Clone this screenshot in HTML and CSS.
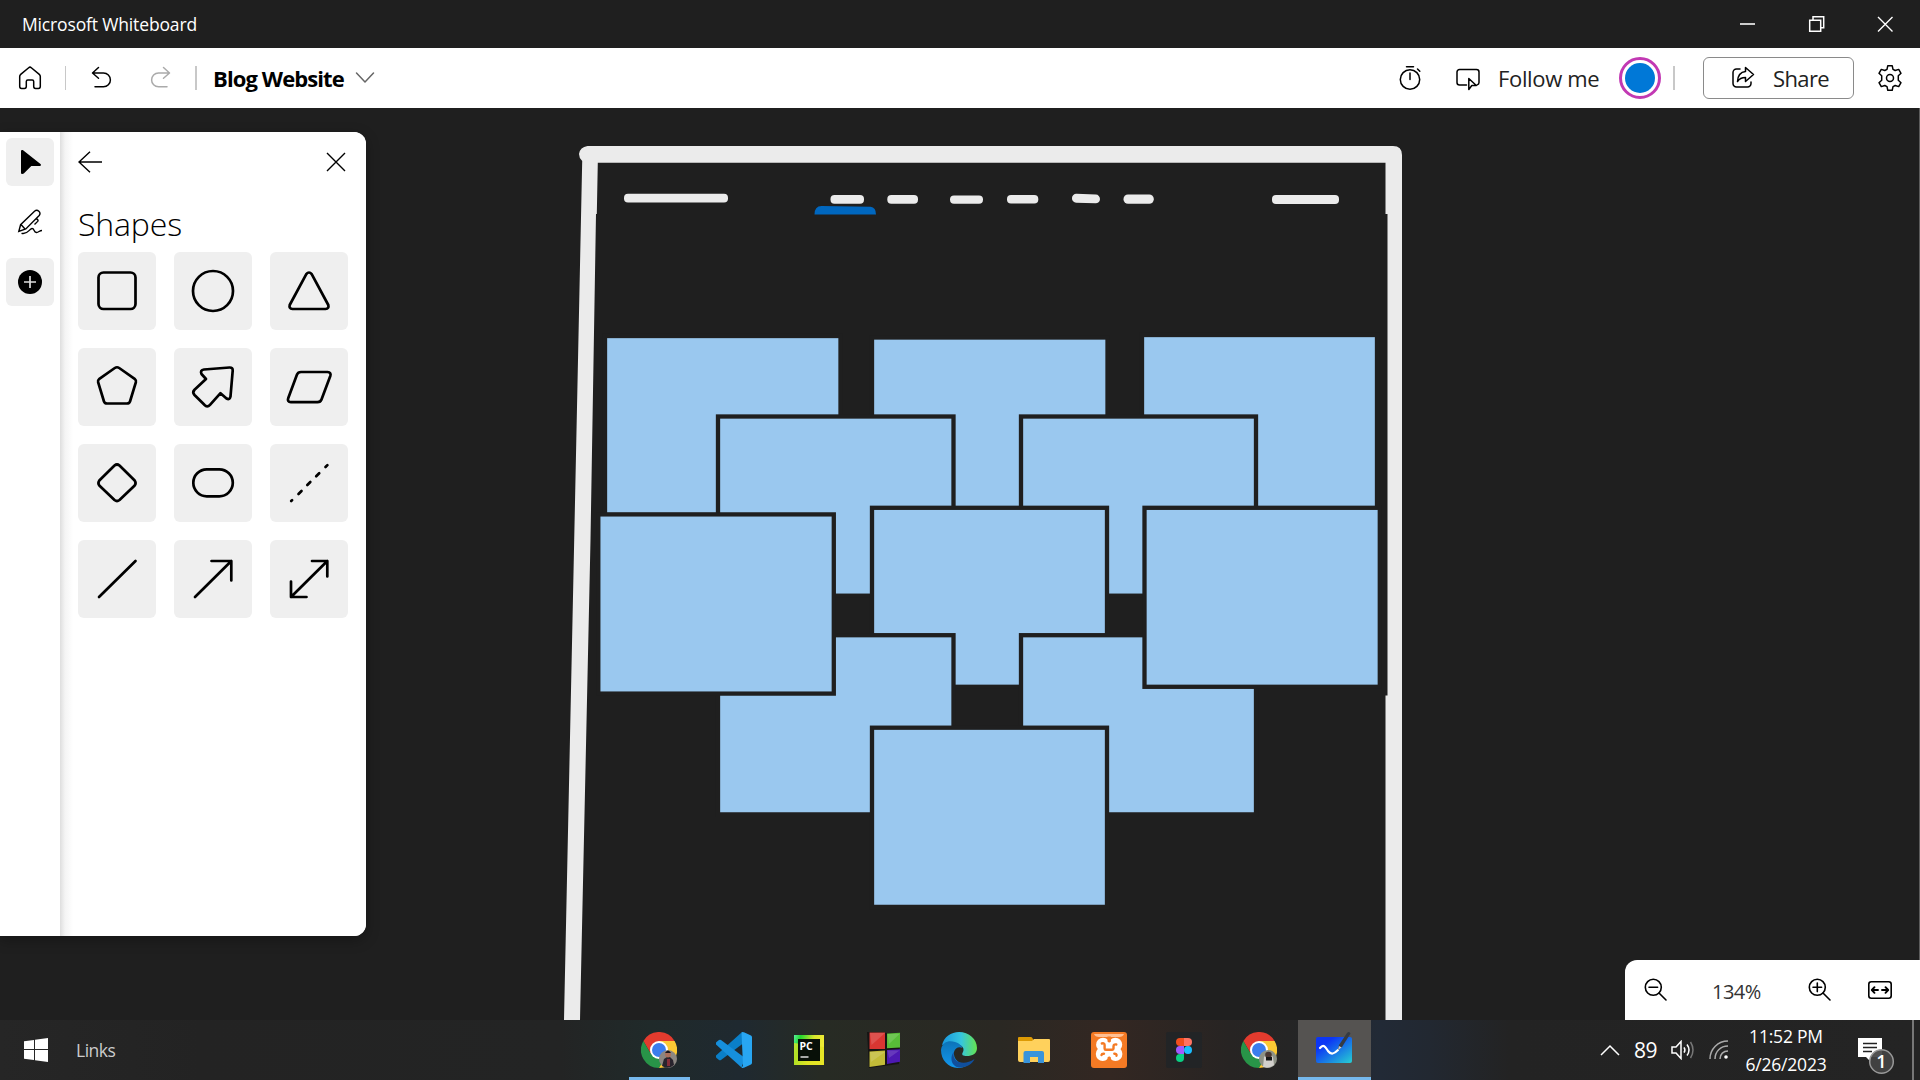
FILE: index.html
```html
<!DOCTYPE html>
<html lang="en">
<head>
<meta charset="utf-8">
<title>Microsoft Whiteboard</title>
<link rel="stylesheet" href="styles.css">
</head>
<body>
<div class="desktop">
  <header class="titlebar">
    <span class="app-name">Microsoft Whiteboard</span>
    <div class="window-controls">
      <svg width="69" height="48" viewBox="0 0 69 48"><path d="M27 24h15" stroke="#ccc" stroke-width="2"/></svg>
      <svg width="69" height="48" viewBox="0 0 69 48" fill="none" stroke="#fff" stroke-width="1.5"><path d="M27.7 20.2h11v11h-11zM31 20v-3.2h10.700v11H39"/></svg>
      <svg width="69" height="48" viewBox="0 0 69 48" fill="none" stroke="#fff" stroke-width="1.4"><path d="M27 17l14.500 14.500M41.500 17L27 31.500"/></svg>
    </div>
  </header>

  <nav class="toolbar">
    <div class="tools">
      <svg class="i-home" width="24" height="24" viewBox="0 0 24 24"><path d="M10.700 1.700a2 2 0 0 1 2.600 0l8 6.700c.7.600 1 1.300 1 2.200v10a1.800 1.800 0 0 1-1.800 1.800h-3a1.800 1.800 0 0 1-1.800-1.800V15.500c0-.9-.6-1.500-1.500-1.500h-4.400c-.9 0-1.500.6-1.500 1.500v5.100a1.800 1.800 0 0 1-1.800 1.800h-3a1.800 1.800 0 0 1-1.800-1.800v-10c0-.9.3-1.600 1-2.200z"/></svg>
      <i class="divider thin"></i>
      <svg class="i-undo" width="24" height="24" viewBox="0 0 24 24"><path d="M9.500 1.500L3.500 7l6 5.200M3.800 7h10.700a6.900 6.900 0 0 1 0 13.800H6"/></svg>
      <svg class="i-redo" width="24" height="24" viewBox="0 0 24 24"><path d="M14.500 1.500l6 5.500-6 5.200M20.200 7H9.500a6.900 6.900 0 0 0 0 13.800H18"/></svg>
      <i class="divider"></i>
      <span class="board-name">Blog Website</span>
      <svg class="i-down" width="20" height="14" viewBox="0 0 20 14"><path d="M1.500 2L10 11l8.500-9"/></svg>
    </div>
    <div class="actions">
      <svg width="24" height="26" viewBox="0 0 24 26"><circle cx="12" cy="14.500" r="9.700"/><path d="M12 8v6.500M8.500 1.800h7M19.500 4l2.300 2.300"/></svg>
      <svg class="i-present" width="26" height="26" viewBox="0 0 26 26"><path d="M11.500 20H4.500a2.500 2.500 0 0 1-2.500-2.500V7a2.500 2.500 0 0 1 2.500-2.500h17A2.500 2.500 0 0 1 24 7v10.500a2.500 2.500 0 0 1-1.800 2.400M13.800 13.500v11l3-4h4.500z"/></svg>
      <span class="follow">Follow me</span>
      <svg class="avatar" width="42" height="42" viewBox="0 0 42 42"><circle cx="21" cy="21" r="19.500" fill="#fff" stroke="#c239b3" stroke-width="3"/><circle cx="21" cy="21" r="15" fill="#0078d7" stroke="none"/></svg>
      <i class="divider"></i>
      <button class="share">
        <svg width="26" height="26" viewBox="0 0 26 26"><path d="M10 4H6.500A3.500 3.500 0 0 0 3 7.500v11A3.500 3.500 0 0 0 6.500 22h11a3.500 3.500 0 0 0 3.500-3.500V17M15.500 2.500l8 7-8 7v-4c-4 0-6.300 1.300-8 4 .3-5.500 3-9.500 8-10z"/></svg>
        <span>Share</span>
      </button>
      <svg class="i-gear" width="28" height="28" viewBox="0 0 28 28"><path d="M11.800 1.700h4.400l.8 3.600 2.200 1.200 3.500-1.100 2.300 3.900-2.700 2.500v4.400l2.700 2.500-2.300 3.900-3.500-1.100-2.200 1.200-.8 3.600h-4.400l-.8-3.600-2.200-1.200-3.500 1.100L3 18.700l2.700-2.500v-4.400L3 9.300l2.300-3.900 3.500 1.100L11 5.300z"/><circle cx="14" cy="14" r="3.500"/></svg>
    </div>
  </nav>

  <main class="board">
    <svg class="drawing" width="1920" height="912" viewBox="0 108 1920 912">
      <path class="ink" d="M587.500 146H1393q9 0 9 9V1020h-16.500V695.400h2V214h-2V162.700H597.800L596.800 214h-.8L590.500 540 580 1020H564L574.200 540 582.200 161Q579 158 579 154q1-7 8.500-8z"/>
      <g class="ink">
        <rect x="624" y="193.700" width="104" height="8.800" rx="4"/>
        <rect x="830.500" y="195" width="33.500" height="8.800" rx="4"/>
        <rect x="887.300" y="195" width="30.700" height="8.800" rx="4"/>
        <rect x="950" y="195.400" width="33" height="8.300" rx="4"/>
        <rect x="1007" y="195" width="31.300" height="8.400" rx="4"/>
        <rect x="1072" y="194.200" width="28" height="8.800" rx="4.300" transform="rotate(2 1086 198)"/>
        <rect x="1123.500" y="194.500" width="30.300" height="9.200" rx="4.500"/>
        <rect x="1272" y="195" width="67" height="9" rx="4"/>
      </g>
      <path d="M814.500 214.500q0-8.500 7-8.500l49 .8q5.500.7 5.500 7.700z" fill="#0067bf"/>
      <g class="cards">
        <rect x="605" y="336" width="235.500" height="179"/>
        <rect x="872" y="337.500" width="235.500" height="179"/>
        <rect x="1142" y="335" width="235" height="179"/>
        <rect x="718" y="416.500" width="235.500" height="179.200"/>
        <rect x="1021" y="416.500" width="235" height="179.200"/>
        <rect x="872" y="507.800" width="235" height="179"/>
        <rect x="718" y="635.200" width="235.500" height="179.200"/>
        <rect x="1021" y="635.200" width="235" height="179.200"/>
        <rect x="598.300" y="514.400" width="235.500" height="179.200"/>
        <rect x="1144.500" y="507.800" width="235.300" height="179"/>
        <rect x="872" y="727.700" width="235" height="179.200"/>
      </g>
      <path d="M1919.500 108V961" stroke="#5c5c5c"/>
    </svg>

    <aside class="panel">
      <div class="rail">
        <button class="rail-btn on"><svg width="24" height="26" viewBox="0 0 24 26"><path d="M3 2.300c0-1.200 1.200-1.700 2.100-1L22.500 15c1 .8.500 2-.7 2h-8.500l-7.500 7.500C4.400 25.400 3 25 3 23.700z"/></svg></button>
        <button class="rail-btn"><svg width="26" height="26" viewBox="0 0 26 26" fill="none" stroke="#000" stroke-width="1.400"><path d="M1.800 22.500l1.800-6.800L17.500 2.300c3-2.500 7 1 4.700 4.200L8.800 20zM4 15.500L8 20M19.500 9.500l1.200 1.300c.5.600.5 1 0 1.600l-3.200 3.200M4.500 24.300c6 1.800 7.500-4.300 10.500-4.800 2.500-.3 1.500 4.200 4.500 4 2.300-.2 3-2 5.500-2"/></svg></button>
        <button class="rail-btn on"><svg width="24" height="24" viewBox="0 0 24 24"><circle cx="12" cy="12" r="12"/><path d="M12 6v12M6 12h12" stroke="#ddd" stroke-width="1.700"/></svg></button>
      </div>
      <section class="shapes">
        <div class="shapes-head">
          <svg width="24" height="22" viewBox="0 0 24 22"><path d="M12 .8L1 11l11 10.200M1 11h23"/></svg>
          <svg width="20" height="20" viewBox="0 0 20 20"><path d="M1 1l18 18M19 1L1 19"/></svg>
        </div>
        <h1>Shapes</h1>
        <div class="grid">
          <button><svg viewBox="0 0 78 78"><rect x="20.500" y="20.500" width="37" height="36.500" rx="5"/></svg></button>
          <button><svg viewBox="0 0 78 78"><circle cx="39" cy="39" r="20"/></svg></button>
          <button><svg viewBox="0 0 78 78"><path d="M36.300 22.200q2.700-3.400 5.400 0L58.300 53q1 3.700-2.800 4h-33q-3.800-.3-2.800-4z"/></svg></button>
          <button><svg viewBox="0 0 78 78"><path d="M36.800 20q2.200-1.500 4.400 0L57 31.200q1.500 1.200.9 3L52 53.500q-.8 2-3 2H29q-2.200 0-3-2L20.100 34.200q-.6-1.800.9-3z"/></svg></button>
          <button><svg viewBox="0 0 78 78"><path d="M30 21.500L55.500 19.500q3.500-.2 3.200 3.200L56.500 48.500q-.8 3.800-4 2l-6-5.300L36 56.800q-2.800 3-5.600 0L20.500 47q-2.500-2.600 0-5.200L32 31l-4.500-5q-1.700-3.800 2.500-4.500z"/></svg></button>
          <button><svg viewBox="0 0 78 78"><path d="M31 24H57.500q4 .5 2.800 4L51.500 51.500q-1 2.700-4 2.700H21q-4-.5-2.800-4L27 26.500Q28 24 31 24z"/></svg></button>
          <button><svg viewBox="0 0 78 78"><path d="M36.500 21.500q2.500-2 5 0L56.700 36.500q1.800 2.500 0 5L41.500 56q-2.500 2-5 0L21.300 41.500q-1.800-2.500 0-5z"/></svg></button>
          <button><svg viewBox="0 0 78 78"><rect x="19.300" y="25.300" width="39.500" height="27" rx="13.500"/></svg></button>
          <button><svg viewBox="0 0 78 78"><path d="M21.200 57l.9-.9M28.500 50l3-3M37.300 41l3-3M46.200 32.200l3-3M55.500 23l1.900-1.900"/></svg></button>
          <button><svg viewBox="0 0 78 78"><path d="M21 57L57.500 21"/></svg></button>
          <button><svg viewBox="0 0 78 78"><path d="M21 57L57.300 21M37.500 21h19.800v19.500"/></svg></button>
          <button><svg viewBox="0 0 78 78"><path d="M21 57L57.300 21M42 21h15.300v15.500M21 41.500V57h15.500"/></svg></button>
        </div>
      </section>
    </aside>

    <div class="zoombar">
      <svg width="24" height="24" viewBox="0 0 24 24"><circle cx="9.300" cy="9.300" r="8"/><path d="M15 15l7 7M5 9.300h8.600"/></svg>
      <span>134%</span>
      <svg class="i-in" width="24" height="24" viewBox="0 0 24 24"><circle cx="9.300" cy="9.300" r="8"/><path d="M15 15l7 7M5 9.300h8.600M9.300 5v8.600"/></svg>
      <svg class="i-fit" width="24" height="18" viewBox="0 0 24 18"><rect x=".8" y=".8" width="22.400" height="16.400" rx="2.500"/><path d="M10 9H4M6.500 6.200L3.800 9l2.700 2.800M14 9h6M17.500 6.200L20.200 9l-2.700 2.800" stroke-width="1.900"/></svg>
    </div>
  </main>

  <footer class="taskbar">
    <div class="start">
      <svg width="24" height="24" viewBox="0 0 24 24"><path fill="#fff" d="M0 3.300L10 1.900V11H0zM11 1.700L24 0v11H11zM0 12h10v9.900L0 20.700zM11 12h13v12l-13-1.800z"/></svg>
      <span>Links</span>
    </div>
    <div class="apps">
      <div class="app running">
        <svg width="36" height="36" viewBox="0 0 36 36"><path d="M2.400 9A18 18 0 0 1 33.600 9H18l-7.800 13.500z" fill="#e33b2e"/><path d="M2.400 9A18 18 0 0 0 18 36l7.800-13.500H10.200z" fill="#289448"/><path d="M33.600 9A18 18 0 0 1 18 36l7.800-13.500L18 9z" fill="#fcc934"/><circle cx="18" cy="18" r="9" fill="#fff"/><circle cx="18" cy="18" r="7" fill="#3b7ded"/><circle cx="27" cy="27" r="9" fill="#8b8681"/><path d="M21 34l2-7 3-2h3l3 3 1 5q-6 5-12 1z" fill="#28242d"/><circle cx="27" cy="22.500" r="3" fill="#aa705b"/><path d="M24 21q3-5 6 0z" fill="#181519"/><path d="M26 27h3v7h-3z" fill="#832e39"/></svg>
      </div>
      <div class="app">
        <svg width="36" height="36" viewBox="0 0 36 36"><path d="M25.500.5L0 23.500q-.5 1.500.5 2.500L3 28q1 .4 2 0L29 10z" fill="#0a7fc8"/><path d="M25.500 35.500L0 12.500q-.5-1.500.5-2.500L3 8q1-.4 2 0L29 26z" fill="#168fdc"/><path d="M25.500.3q1.500-.5 3 .2L35 3.500q1 .5 1 1.800v25.400q0 1.300-1 1.800l-6.500 3q-1.500.7-3 .2l1.500-2z" fill="#28a6f2"/></svg>
      </div>
      <div class="app">
        <svg width="30" height="30" viewBox="0 0 30 30"><defs><linearGradient id="pc" x1="0" y1="0" x2="1" y2=".25"><stop offset="0" stop-color="#59ed9c"/><stop offset=".22" stop-color="#21d72d"/><stop offset=".65" stop-color="#d8e52d"/><stop offset="1" stop-color="#f1ec35"/></linearGradient></defs><path d="M0 0h30v30H0z" fill="url(#pc)"/><path d="M0 8l30 4v18H0z" fill="#e2e322" opacity=".75"/><path d="M4 4h22v22H4z" fill="#081008"/><text x="5.500" y="15" class="pc">PC</text><path d="M6.500 22h8" stroke="#ddd" stroke-width="1.500"/></svg>
      </div>
      <div class="app">
        <svg width="34" height="36" viewBox="0 0 34 36"><path d="M0 0l18 1 15 0-1 31-30 4z" fill="#161414"/><path d="M2.500.5h15.500v16.500H2.500z" fill="#d93632"/><path d="M20 1.500l13-.8v14.800l-13 .8z" fill="#58bd38"/><path d="M2.500 19.500l15.500-1v14.200L2.500 35z" fill="#c2bb38"/><path d="M20 18l13-.7v12.500L20 32z" fill="#4d19b2"/><path d="M3 1h15L4.500 13zM20.500 2h12L22 12zM3 20h15L4 30zM20.500 18.500h12L22 26z" fill="#fff" opacity=".14"/></svg>
      </div>
      <div class="app">
        <svg width="36" height="36" viewBox="0 0 36 36"><defs><linearGradient id="e1"><stop offset="0" stop-color="#1795df"/><stop offset=".55" stop-color="#36c5dd"/><stop offset="1" stop-color="#65e34f"/></linearGradient><linearGradient id="e2" x2="0" y2="1"><stop stop-color="#0c73b8"/><stop offset="1" stop-color="#1398ef"/></linearGradient></defs><path d="M1 13C3 5 10 0 18 0c10 0 18 7 18 16 0 6-5 8-10 8-4 0-6-1-4-4 3-6-6-11-21-7z" fill="url(#e1)"/><path d="M0 18C1 9 9 8 14 10c4 1 7 4 7.500 6C18 14 14 16 13 20c-1 8 6 13 15 12-4 3-8 4-11 4C7 35.500 0 28 0 18z" fill="url(#e2)"/><path d="M13 20c-3 9 9 15 20.500 7-2 5-8 9-16 8.500C8 33 10 22 13 20z" fill="#104f9d"/></svg>
      </div>
      <div class="app">
        <svg width="32" height="28" viewBox="0 0 32 28"><path d="M0 2q0-1 1-1h12q1 0 2 2l1 3H0z" fill="#dd9a04"/><path d="M0 5h14l2-2h15q1 0 1 1v20q0 2-2 2H2q-2 0-2-2z" fill="#ffd15c"/><path d="M5.500 27V17q0-2 2-2H24q2 0 2 2v10h-6v-6h-8v6z" fill="#3994db"/></svg>
      </div>
      <div class="app">
        <svg width="36" height="36" viewBox="0 0 36 36"><rect width="36" height="36" rx="3" fill="#f47a24"/><path d="M3 2h30q-1 3-5 3H8Q4 5 3 2z" fill="#ffc094"/><g fill="#fff"><circle cx="12" cy="12.700" r="6.900"/><circle cx="24.300" cy="12.700" r="6.900"/><circle cx="11.700" cy="22" r="6.900"/><circle cx="24.500" cy="22" r="6.900"/><path d="M9 11h18v13H9z"/></g><path d="M10.800 11.500q2.800-.8 2.800 1.500v3.500q0 1.300 1.200 1.300h6.500q1.200 0 1.200-1.200v-2.200q0-2.400 2.800-1.900M10.500 23q.3-1.500 2.500-1.300M23.300 21.700q2.500-.2 2.200 2" fill="none" stroke="#f47a24" stroke-width="2.400" stroke-linecap="round"/><path d="M16.500 4.500h3.400v5q-1.700 1.800-3.400 0zM16.500 30v-4.500q1.700-1.800 3.400 0V30z" fill="#f47a24"/></svg>
      </div>
      <div class="app">
        <svg width="36" height="36" viewBox="0 0 36 36"><rect width="36" height="36" rx="2" fill="#222426"/><path d="M18 6h-4a4 4 0 0 0 0 8h4z" fill="#f24e1e"/><path d="M18 6h4a4 4 0 0 1 0 8h-4z" fill="#ff7262"/><path d="M18 14h-4a4 4 0 0 0 0 8h4z" fill="#a259ff"/><circle cx="22" cy="18" r="4" fill="#1abcfe"/><path d="M18 22h-4a4 4 0 1 0 4 4z" fill="#0acf83"/></svg>
      </div>
      <div class="app">
        <svg width="36" height="36" viewBox="0 0 36 36"><path d="M2.400 9A18 18 0 0 1 33.600 9H18l-7.800 13.500z" fill="#e33b2e"/><path d="M2.400 9A18 18 0 0 0 18 36l7.800-13.500H10.200z" fill="#289448"/><path d="M33.600 9A18 18 0 0 1 18 36l7.800-13.500L18 9z" fill="#fcc934"/><circle cx="18" cy="18" r="9" fill="#fff"/><circle cx="18" cy="18" r="7" fill="#3b7ded"/><circle cx="27" cy="27" r="9" fill="#8d9185"/><path d="M22 35l1-10 3-3h3l3 3 1 8q-5 4-11 2z" fill="#d2d0cc"/><circle cx="27.500" cy="23" r="3.300" fill="#4a3833"/><path d="M25 25h6v3.500h-6z" fill="#171717"/></svg>
      </div>
      <div class="app active">
        <svg width="36" height="36" viewBox="0 0 36 36"><defs><linearGradient id="wb" x1="0" y1="0" x2="1" y2="1"><stop offset=".25" stop-color="#0c36f5"/><stop offset="1" stop-color="#27cfd2"/></linearGradient></defs><rect y="5" width="36" height="26" rx="2" fill="url(#wb)"/><path d="M4 16c4-5 6 0 8 3 3 4 6 3 10-1" fill="none" stroke="#fff" stroke-width="2.200" stroke-linecap="round"/><path d="M22 18l1-5L31 1q2-2 3.500.5L26 15z" fill="#353b42"/><path d="M22 18l1-4 2.700 1.600z" fill="#ccc"/></svg>
      </div>
    </div>
    <div class="tray">
      <svg width="20" height="12" viewBox="0 0 20 12"><path d="M1 11l9-9 9 9"/></svg>
      <span class="level">89</span>
      <svg class="i-sound" width="24" height="20" viewBox="0 0 24 20"><path d="M1 7h4l5-5.500v17L5 13H1z"/><path d="M13 7.300q1.800 2.700 0 5.400M16 4.500q4 5.500 0 11"/><path d="M19.500 2q5 8 0 16" stroke="#777"/></svg>
      <svg class="i-wifi" width="20" height="20" viewBox="0 0 20 20"><path d="M1 19C1 9 9 1 19 1M6 19C6 11.500 11.500 6 19 6M11 19c0-5 3.500-8 8-8" stroke="#aaa"/><circle cx="17" cy="17" r="1.800" fill="#fff" stroke="none"/></svg>
      <div class="clock"><span class="time">11:52 PM</span><span class="date">6/26/2023</span></div>
      <svg class="i-note" width="38" height="38" viewBox="0 0 38 38"><path d="M0 0h24v19H13v5l-5-5H0z" fill="#fff" stroke="none"/><path d="M5 5.500h14M5 9.500h14M5 13.500h9" stroke="#222"/><circle cx="23.500" cy="23.500" r="11.800" fill="#444" fill-opacity=".93" stroke="#999"/><text x="23.500" y="30" text-anchor="middle" class="count">1</text></svg>
      <i class="peek"></i>
    </div>
  </footer>
</div>
</body>
</html>
```
FILE: styles.css
```css
* { box-sizing: border-box; }
body {
  margin: 0;
  width: 1920px;
  height: 1080px;
  overflow: hidden;
  font-family: "Open Sans", "Noto Sans", sans-serif;
  color: #000;
}
svg { display: block; flex: none; }
button { border: 0; padding: 0; margin: 0; background: none; font: inherit; color: inherit; }
span { white-space: nowrap; }
.desktop { display: flex; flex-direction: column; height: 1080px; background: #1f1f1f; }

.titlebar { height: 48px; display: flex; justify-content: space-between; align-items: center; background: #1f1f1f; color: #fff; padding-left: 22px; }
.app-name { font-size: 17.5px; letter-spacing: -0.15px; }
.window-controls { display: flex; }

.toolbar { height: 60px; background: #fff; display: flex; justify-content: space-between; flex: none; }
.toolbar svg { fill: none; stroke: #000; stroke-width: 1.5; stroke-linecap: round; stroke-linejoin: round; }
.tools, .actions { display: flex; align-items: center; }
.divider { width: 2px; height: 24px; background: #c8c8c8; flex: none; }
.divider.thin { width: 1px; margin-left: 23px; }
.i-home { margin-left: 18px; }
.i-undo { margin-left: 23px; }
.toolbar .i-redo { margin-left: 36px; stroke: #aaa; }
.tools .divider:not(.thin) { margin-left: 22px; }
.board-name { width: 130px; margin-left: 16px; font-size: 22px; font-weight: 700; letter-spacing: -0.9px; line-height: 30px; }
.toolbar .i-down { margin-left: 12px; stroke: #666; }
.actions { padding-right: 16px; }
.i-present { margin-left: 33px; }
.follow { width: 103px; margin-left: 17px; font-size: 22px; letter-spacing: -0.35px; color: #222; }
.avatar { margin-left: 18px; }
.actions .divider { margin-left: 12px; }
.share { display: flex; align-items: center; width: 151px; height: 42px; margin-left: 28px; padding-left: 26px; border: 1px solid #8a8a8a; border-radius: 6px; }
.share span { margin-left: 17px; font-size: 22px; letter-spacing: -0.6px; color: #222; }
.i-gear { margin-left: 22px; }

.board { position: relative; height: 912px; flex: none; padding-top: 24px; overflow: hidden; }
.drawing { position: absolute; left: 0; top: 0; }
.ink { fill: #ebebeb; }
.cards { fill: #9ac8ef; stroke: #1f1f1f; stroke-width: 4.3; }

.panel { position: relative; display: flex; width: 366px; height: 804px; background: #fff; border-radius: 0 12px 12px 0; box-shadow: 0 4px 14px rgba(0, 0, 0, .3); }
.rail { width: 60px; padding: 6px; display: flex; flex-direction: column; gap: 12px; }
.rail-btn { width: 48px; height: 48px; border-radius: 6px; display: grid; place-items: center; }
.rail-btn.on { background: #efefef; }
.shapes { flex: 1; padding: 18px 18px 0; border-radius: 0 12px 12px 0; background: linear-gradient(90deg, #dedede, #f4f4f4 5px, #fff 13px); }
.shapes-head { height: 24px; display: flex; align-items: center; justify-content: space-between; padding-right: 2.5px; }
.shapes-head svg { fill: none; stroke: #000; stroke-width: 1.4; }
.shapes h1 { margin: 28px 0 6px; height: 44px; line-height: 44px; font-size: 32px; font-weight: 350; letter-spacing: -0.15px; }
.grid { display: grid; grid-template-columns: repeat(3, 78px); grid-auto-rows: 78px; gap: 18px; }
.grid button { border-radius: 6px; background: #efefef; }
.grid svg { width: 78px; height: 78px; fill: none; stroke: #000; stroke-width: 2.7; stroke-linecap: round; stroke-linejoin: round; }

.zoombar { position: absolute; right: 0; bottom: 0; width: 295px; height: 60px; padding-left: 19px; display: flex; align-items: center; background: #fff; border-radius: 12px 0 0 0; }
.zoombar svg { fill: none; stroke: #000; stroke-width: 1.6; stroke-linecap: round; stroke-linejoin: round; }
.zoombar span { width: 52px; margin-left: 44px; font-size: 20px; letter-spacing: -0.5px; color: #333; padding-top: 2px; }
.zoombar .i-in { margin-left: 44px; }
.zoombar .i-fit { margin-left: 36px; }

.taskbar { height: 60px; display: flex; color: #fff; background: linear-gradient(90deg, #262626 0, #232323 200px, #232424 560px, #202a2a 650px, #1f2930 740px, #272b24 820px, #2a2823 1000px, #332722 1110px, #272423 1230px, #252525 1290px, #222a36 1380px, #222831 1430px, #232323 1510px, #242424); }
.start { width: 622px; display: flex; align-items: center; padding-left: 24px; }
.start span { margin-left: 28px; font-size: 17.5px; letter-spacing: -0.5px; color: #ccc; }
.apps { display: flex; }
.app { width: 73px; height: 60px; margin: 0 1px; padding-right: 2px; display: grid; place-items: center; }
.app.running { background: linear-gradient(#76b9ed, #76b9ed) 6px bottom / 61px 3px no-repeat; }
.app.active { background: linear-gradient(#76b9ed, #76b9ed) bottom / 100% 3px no-repeat, #555351; }
.pc { font: 700 10.5px "Open Sans", sans-serif; fill: #fff; }
.tray { flex: 1; display: flex; align-items: center; padding-left: 228px; }
.tray svg { fill: none; stroke: #fff; stroke-width: 1.5; }
.level { width: 24px; margin-left: 14px; font-size: 21px; letter-spacing: -0.5px; }
.i-sound { margin-left: 13px; }
.i-wifi { margin-left: 14px; }
.clock { width: 88px; height: 60px; margin-left: 13px; display: flex; flex-direction: column; align-items: center; font-size: 17.5px; letter-spacing: -0.2px; line-height: 28px; padding-top: 2px; }
.i-note { margin: 14px 0 0 28px; }
.tray .count { font: 600 18px "Open Sans", sans-serif; fill: #fff; stroke: none; }
.peek { width: 2px; height: 60px; margin-left: 16px; background: #777; }
```
